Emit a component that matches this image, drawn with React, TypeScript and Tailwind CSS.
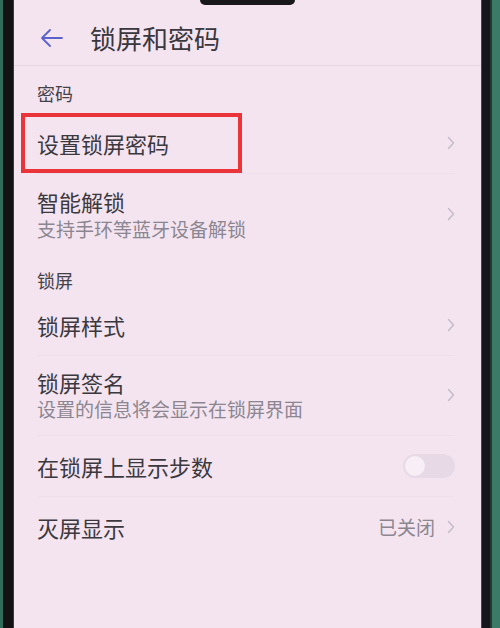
import React from 'react';

const font = '"Noto Sans CJK SC", "Noto Sans", sans-serif';

function Chevron() {
  return (
    <svg width="8" height="14" viewBox="0 0 8 14" fill="none" className="shrink-0">
      <path d="M1.5 1.5 L6.5 7 L1.5 12.5" stroke="#c4bac6" strokeWidth="1.4" strokeLinecap="round" strokeLinejoin="round" />
    </svg>
  );
}

function Divider() {
  return <div className="ml-[23px] mr-[26px] h-px bg-[#ede0ec]" />;
}

export default function App() {
  return (
    <div className="flex h-[628px] w-[500px] overflow-hidden bg-[#151517]" style={{ fontFamily: font }}>
      {/* left bezel */}
      <div className="flex w-[14px] shrink-0">
        <div className="w-[3px] bg-[#2f6b59]" />
        <div className="flex-1 bg-[#121214]" />
        <div className="w-px bg-[#3a3a40]" />
      </div>

      {/* screen */}
      <div className="relative flex w-[467px] shrink-0 flex-col bg-[#f3e4f0] text-[#3b383e]">
        {/* notch */}
        <div className="absolute left-[186px] top-0 h-[5px] w-[95px] rounded-b-[6px] bg-[#18181a]" />

        {/* header */}
        <div className="flex h-[66px] items-center gap-[26px] border-b border-[#e6d8e5] pl-[26px] pt-[10px]">
          <svg width="24" height="20" viewBox="0 0 24 20" fill="none">
            <path d="M22 10 H3 M10 2 L2 10 L10 18" stroke="#5c62cc" strokeWidth="1.8" strokeLinecap="round" strokeLinejoin="round" />
          </svg>
          <span className="text-[26px] leading-[32px] text-[#3a373d]">锁屏和密码</span>
        </div>

        {/* 密码 section */}
        <div className="pl-[23px] pt-[15px] pb-[8px] text-[18px] leading-[24px] text-[#454248]">密码</div>

        <div className="flex h-[60px] items-center justify-between pr-[26px]">
          <div className="ml-[7px] flex h-[60px] w-[221px] items-center border-4 border-[#ea343a] pl-[12px]">
            <span className="text-[22px] leading-[28px]">设置锁屏密码</span>
          </div>
          <Chevron />
        </div>
        <Divider />

        <div className="flex items-center justify-between pl-[23px] pr-[26px] pt-[13px] pb-[14px]">
          <div className="flex flex-col">
            <span className="text-[22px] leading-[28px]">智能解锁</span>
            <span className="mt-[2px] text-[19px] leading-[24px] text-[#8b8690]">支持手环等蓝牙设备解锁</span>
          </div>
          <Chevron />
        </div>

        {/* 锁屏 section */}
        <div className="pl-[23px] pt-[13px] pb-[3px] text-[18px] leading-[24px] text-[#454248]">锁屏</div>

        <div className="flex h-[60px] items-center justify-between pl-[23px] pr-[26px]">
          <span className="text-[22px] leading-[28px]">锁屏样式</span>
          <Chevron />
        </div>
        <Divider />

        <div className="flex items-center justify-between pl-[23px] pr-[26px] pt-[12px] pb-[14px]">
          <div className="flex flex-col">
            <span className="text-[22px] leading-[28px]">锁屏签名</span>
            <span className="mt-[1px] text-[19px] leading-[24px] text-[#8b8690]">设置的信息将会显示在锁屏界面</span>
          </div>
          <Chevron />
        </div>
        <Divider />

        <div className="flex h-[60px] items-center justify-between pl-[23px] pr-[26px]">
          <span className="text-[22px] leading-[28px]">在锁屏上显示步数</span>
          <div className="flex h-[24px] w-[52px] items-center rounded-full bg-[#e8d9e7] px-[2px]">
            <div className="h-[20px] w-[20px] rounded-full bg-[#f7eef6]" />
          </div>
        </div>
        <Divider />

        <div className="flex h-[60px] items-center justify-between pl-[23px] pr-[26px]">
          <span className="text-[22px] leading-[28px]">灭屏显示</span>
          <div className="flex items-center gap-[12px]">
            <span className="text-[19px] leading-[24px] text-[#8b8690]">已关闭</span>
            <Chevron />
          </div>
        </div>

        <div className="flex-1" />
      </div>

      {/* right bezel */}
      <div className="flex w-[19px] shrink-0">
        <div className="w-px bg-[#4a4650]" />
        <div className="w-[8px] bg-[#16141c]" />
        <div className="w-[2px] bg-[#1f3a32]" />
        <div className="flex-1 bg-[#3a7a66]" />
      </div>
    </div>
  );
}
